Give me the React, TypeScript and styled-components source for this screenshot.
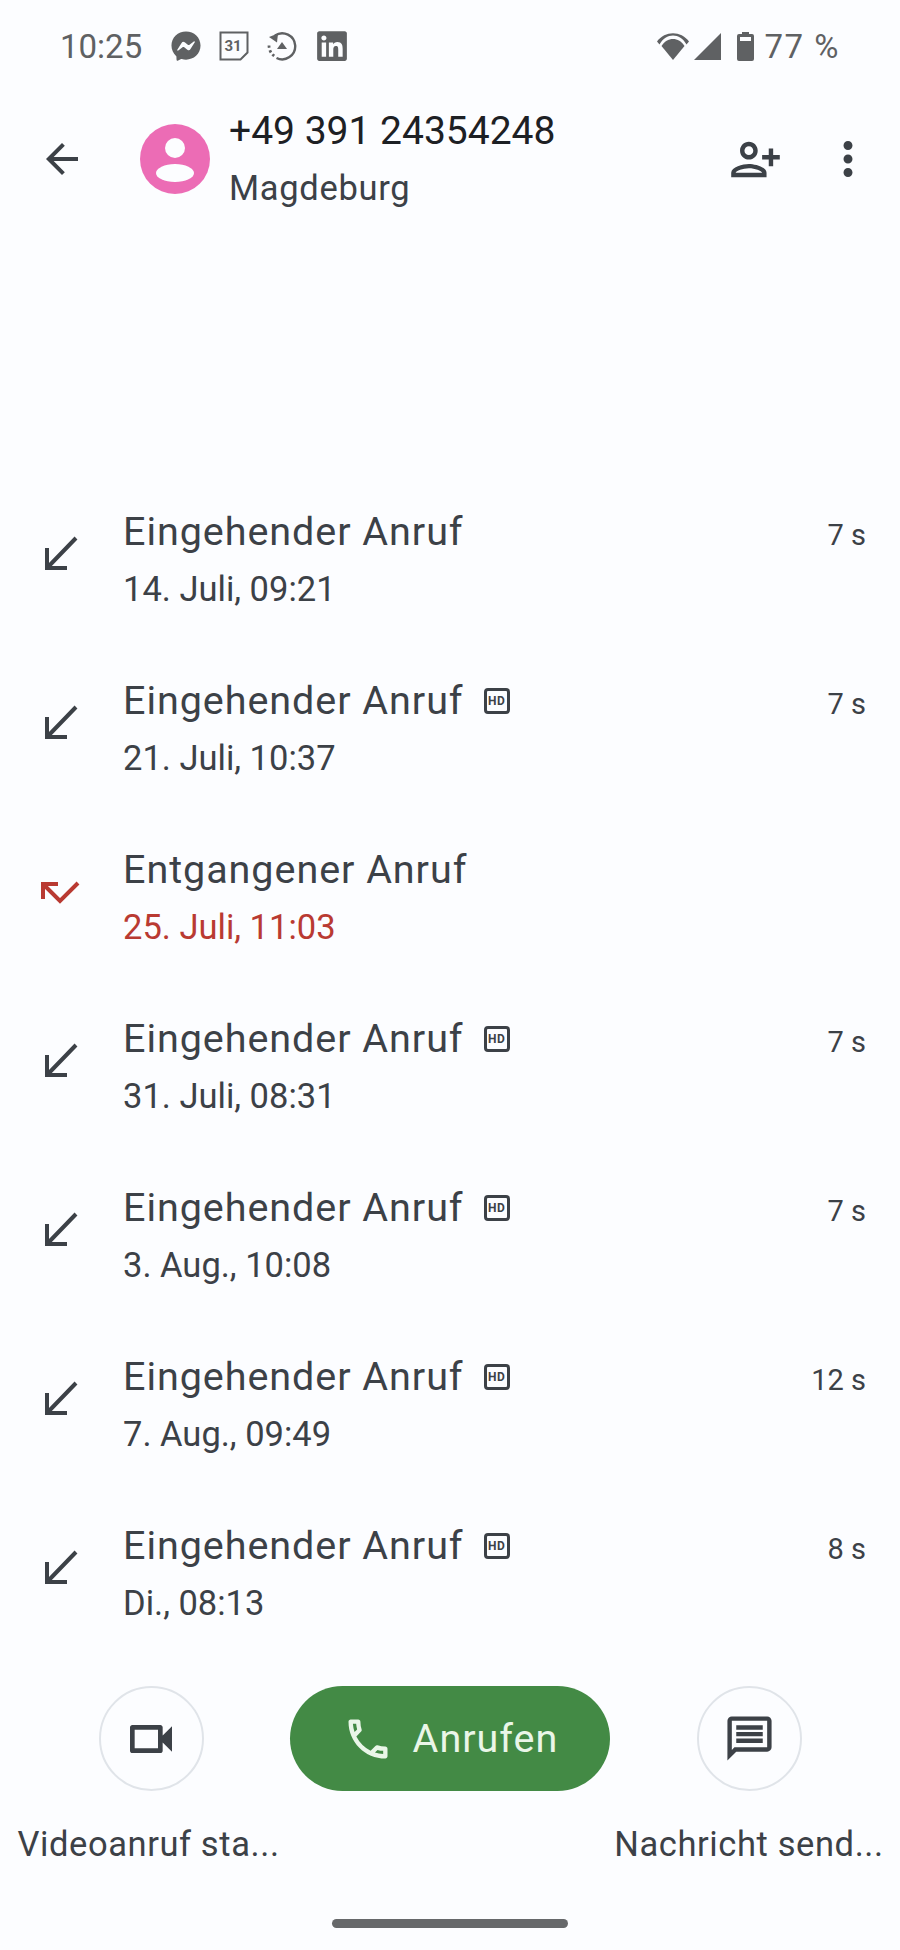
import React from 'react';
import styled, { createGlobalStyle } from 'styled-components';
import { FaFacebookMessenger, FaLinkedin } from 'react-icons/fa';
import {
  MdArrowBack,
  MdMoreVert,
  MdOutlineCall,
  MdOutlineMessage,
  MdOutlinePersonAddAlt1,
  MdOutlineVideocam,
} from 'react-icons/md';

const GlobalStyle = createGlobalStyle`
  html, body {
    margin: 0;
    padding: 0;
    background: #fcfdff;
  }
`;

const Page = styled.div`
  width: 900px;
  height: 1950px;
  display: flex;
  flex-direction: column;
  overflow: hidden;
  background: #fcfdff;
  color: #3c4147;
  font-family: Roboto, "Liberation Sans", sans-serif;
`;

const StatusBar = styled.div`
  height: 92px;
  flex: none;
  display: flex;
  align-items: center;
  padding: 0 60px 0 60px;
  color: #5f6163;
`;

const Clock = styled.span`
  font-size: 33px;
  margin-right: 29px;
`;

const NotificationIcons = styled.div`
  display: flex;
  align-items: center;
  gap: 18px;
  flex: 1;
`;

const SystemIcons = styled.div`
  display: flex;
  align-items: center;
  gap: 5px;
`;

const Battery = styled.span`
  font-size: 33px;
  letter-spacing: 1.5px;
  margin-left: 6px;
`;

const Header = styled.header`
  height: 134px;
  flex: none;
  display: flex;
  align-items: center;
  padding: 0 25px 0 38px;
  color: #3c4147;
`;

const Avatar = styled.svg`
  width: 70px;
  height: 70px;
  margin: 0 19px 0 54px;
  flex: none;
`;

const Titles = styled.div`
  flex: 1;
  display: flex;
  flex-direction: column;
  gap: 14px;
  padding-bottom: 2px;
`;

const Number = styled.div`
  font-size: 39px;
  line-height: 46px;
  color: #1d2024;
`;

const Place = styled.div`
  font-size: 34.5px;
  line-height: 40px;
  letter-spacing: 0.7px;
`;

const HeaderActions = styled.div`
  display: flex;
  align-items: center;
  gap: 39px;
`;

const CallList = styled.ul`
  flex: 1;
  min-height: 0;
  overflow: hidden;
  list-style: none;
  margin: 248px 0 0;
  padding: 0;
`;

const Row = styled.li`
  height: 169px;
  display: flex;
  align-items: center;
  padding: 0 34px 0 36px;
  box-sizing: border-box;
`;

const DirectionIcon = styled.svg`
  width: 48px;
  height: 48px;
  flex: none;
  margin-right: 39px;
`;

const RowText = styled.div`
  flex: 1;
  display: flex;
  flex-direction: column;
  gap: 14px;
`;

const RowTitle = styled.div`
  display: flex;
  align-items: center;
  gap: 20px;
  font-size: 39.5px;
  line-height: 46px;
  letter-spacing: 0.95px;
`;

const HdBadge = styled.span`
  width: 26px;
  height: 26px;
  box-sizing: border-box;
  border: 3px solid #3c4147;
  border-radius: 4px;
  display: flex;
  align-items: center;
  justify-content: center;
  font-size: 12px;
  font-weight: 700;
  letter-spacing: 0.5px;
`;

const RowDate = styled.div<{ $missed?: boolean }>`
  font-size: 34.5px;
  line-height: 40px;
  color: ${(p) => (p.$missed ? '#b93a32' : '#3c4147')};
`;

const Duration = styled.div`
  font-size: 29px;
  align-self: flex-start;
  margin-top: 44px;
`;

const ActionBar = styled.div`
  flex: none;
  display: flex;
  align-items: flex-start;
  gap: 6px;
  padding: 0 18px;
  height: 233px;
  margin-top: 29px;
`;

const Action = styled.div`
  width: 266px;
  flex: none;
  display: flex;
  flex-direction: column;
  align-items: center;
  gap: 33px;
`;

const RoundButton = styled.button`
  width: 105px;
  height: 105px;
  border-radius: 50%;
  border: 2px solid #e0e4e9;
  background: transparent;
  color: #3c4147;
  padding: 0;
  display: flex;
  align-items: center;
  justify-content: center;
`;

const ActionLabel = styled.span<{ $nudge?: number }>`
  font-size: 34.5px;
  line-height: 40px;
  letter-spacing: 0.6px;
  white-space: nowrap;
  margin-right: ${(p) => p.$nudge ?? 0}px;
`;

const CallButton = styled.button`
  width: 320px;
  height: 105px;
  flex: none;
  border: 0;
  border-radius: 53px;
  background: #438a45;
  color: #eaf6e8;
  display: flex;
  align-items: center;
  justify-content: center;
  gap: 19px;
  font-family: inherit;
  font-size: 39.5px;
  letter-spacing: 1px;
`;

const HomeBar = styled.div`
  flex: none;
  width: 236px;
  height: 9px;
  border-radius: 5px;
  background: #66686a;
  margin: 0 auto 22px;
`;

const CalendarIcon = () => (
  <svg width="30" height="30" viewBox="0 0 30 30">
    <path d="M1.5 1.5h27v20l-7 7h-20z" fill="none" stroke="currentColor" strokeWidth="2" />
    <text x="14" y="20" textAnchor="middle" fontSize="15" fontWeight="700" fontFamily="Roboto, sans-serif" fill="currentColor">31</text>
  </svg>
);

const RestoreIcon = () => (
  <svg width="30" height="30" viewBox="0 0 30 30">
    <path d="M8 4.5A13 13 0 1 1 9.5 27" fill="none" stroke="currentColor" strokeWidth="2.4" />
    <path d="M2 14.5A13 13 0 0 0 8 25.5" fill="none" stroke="currentColor" strokeWidth="2.8" strokeDasharray="2.4 2.4" />
    <path d="M2 6l9-3.5-1 9z" fill="currentColor" />
    <path d="M15 11l5 7H10z" fill="currentColor" />
  </svg>
);

const WifiIcon = () => (
  <svg width="32" height="27" viewBox="0 0 32 27">
    <path d="M0 8.5C8-2.5 24-2.5 32 8.5L29.5 11.5C23-.5 9-.5 2.5 11.5z" fill="currentColor" />
    <path d="M4.5 13C10 3.5 22 3.5 27.5 13L16 27z" fill="currentColor" />
  </svg>
);

const SignalIcon = () => (
  <svg width="27" height="27" viewBox="0 0 27 27">
    <path d="M27 0v27H0z" fill="currentColor" />
  </svg>
);

const BatteryIcon = () => (
  <svg width="17" height="29" viewBox="0 0 17 29" style={{ marginLeft: 11 }}>
    <path d="M5 2V0h7v2h3a2 2 0 0 1 2 2v23a2 2 0 0 1-2 2H2a2 2 0 0 1-2-2V4a2 2 0 0 1 2-2z" fill="currentColor" />
    <rect x="3" y="5" width="11" height="4" fill="#fcfdff" />
  </svg>
);

const IncomingIcon = () => (
  <DirectionIcon viewBox="0 0 48 48">
    <path d="M40 3L11 33M11 13v20h20" fill="none" stroke="#3c4147" strokeWidth="4" />
  </DirectionIcon>
);

const MissedIcon = () => (
  <DirectionIcon viewBox="0 0 48 48">
    <path d="M42 10L24 28 7 11M7 26V11h15" fill="none" stroke="#b93a32" strokeWidth="4" />
  </DirectionIcon>
);

type Call = { title: string; date: string; hd?: boolean; duration?: string; missed?: boolean };

const calls: Call[] = [
  { title: 'Eingehender Anruf', date: '14. Juli, 09:21', duration: '7 s' },
  { title: 'Eingehender Anruf', date: '21. Juli, 10:37', hd: true, duration: '7 s' },
  { title: 'Entgangener Anruf', date: '25. Juli, 11:03', missed: true },
  { title: 'Eingehender Anruf', date: '31. Juli, 08:31', hd: true, duration: '7 s' },
  { title: 'Eingehender Anruf', date: '3. Aug., 10:08', hd: true, duration: '7 s' },
  { title: 'Eingehender Anruf', date: '7. Aug., 09:49', hd: true, duration: '12 s' },
  { title: 'Eingehender Anruf', date: 'Di., 08:13', hd: true, duration: '8 s' },
];

export default function App() {
  return (
    <Page>
      <GlobalStyle />
      <StatusBar>
        <Clock>10:25</Clock>
        <NotificationIcons>
          <FaFacebookMessenger size={30} />
          <CalendarIcon />
          <RestoreIcon />
          <FaLinkedin size={34} />
        </NotificationIcons>
        <SystemIcons>
          <WifiIcon />
          <SignalIcon />
          <BatteryIcon />
          <Battery>77 %</Battery>
        </SystemIcons>
      </StatusBar>

      <Header>
        <MdArrowBack size={48} />
        <Avatar viewBox="0 0 70 70">
          <circle cx="35" cy="35" r="35" fill="#ec6cb5" />
          <circle cx="35" cy="24" r="10" fill="#fcfdff" />
          <ellipse cx="35" cy="49" rx="19" ry="9" fill="#fcfdff" />
        </Avatar>
        <Titles>
          <Number>+49 391 24354248</Number>
          <Place>Magdeburg</Place>
        </Titles>
        <HeaderActions>
          <MdOutlinePersonAddAlt1 size={53} />
          <MdMoreVert size={54} />
        </HeaderActions>
      </Header>

      <CallList>
        {calls.map((call) => (
          <Row key={call.date}>
            {call.missed ? <MissedIcon /> : <IncomingIcon />}
            <RowText>
              <RowTitle>
                {call.title}
                {call.hd && <HdBadge>HD</HdBadge>}
              </RowTitle>
              <RowDate $missed={call.missed}>{call.date}</RowDate>
            </RowText>
            {call.duration && <Duration>{call.duration}</Duration>}
          </Row>
        ))}
      </CallList>

      <ActionBar>
        <Action>
          <RoundButton>
            <MdOutlineVideocam size={56} />
          </RoundButton>
          <ActionLabel $nudge={5}>Videoanruf sta...</ActionLabel>
        </Action>
        <CallButton>
          <MdOutlineCall size={52} />
          Anrufen
        </CallButton>
        <Action>
          <RoundButton>
            <MdOutlineMessage size={53} />
          </RoundButton>
          <ActionLabel>Nachricht send...</ActionLabel>
        </Action>
      </ActionBar>

      <HomeBar />
    </Page>
  );
}
